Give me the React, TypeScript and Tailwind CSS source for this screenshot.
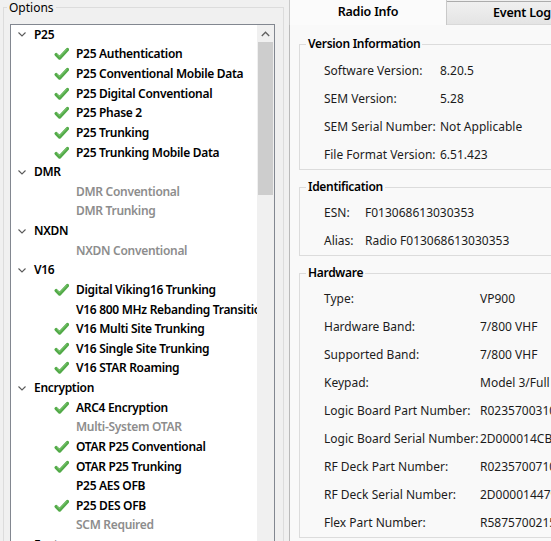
import React from "react";

type Kind = "h" | "c" | "g" | "b";
type Item = { t: string; k: Kind };

const items: Item[] = [
  { t: "P25", k: "h" },
  { t: "P25 Authentication", k: "c" },
  { t: "P25 Conventional Mobile Data", k: "c" },
  { t: "P25 Digital Conventional", k: "c" },
  { t: "P25 Phase 2", k: "c" },
  { t: "P25 Trunking", k: "c" },
  { t: "P25 Trunking Mobile Data", k: "c" },
  { t: "DMR", k: "h" },
  { t: "DMR Conventional", k: "g" },
  { t: "DMR Trunking", k: "g" },
  { t: "NXDN", k: "h" },
  { t: "NXDN Conventional", k: "g" },
  { t: "V16", k: "h" },
  { t: "Digital Viking16 Trunking", k: "c" },
  { t: "V16 800 MHz Rebanding Transition", k: "b" },
  { t: "V16 Multi Site Trunking", k: "c" },
  { t: "V16 Single Site Trunking", k: "c" },
  { t: "V16 STAR Roaming", k: "c" },
  { t: "Encryption", k: "h" },
  { t: "ARC4 Encryption", k: "c" },
  { t: "Multi-System OTAR", k: "g" },
  { t: "OTAR P25 Conventional", k: "c" },
  { t: "OTAR P25 Trunking", k: "c" },
  { t: "P25 AES OFB", k: "b" },
  { t: "P25 DES OFB", k: "c" },
  { t: "SCM Required", k: "g" },
  { t: "Features", k: "h" },
];

function Check() {
  return (
    <svg width="15" height="14" viewBox="0 0 15 14">
      <path
        d="M2.2 7.6 L5.6 11 L13.4 2.6"
        fill="none"
        stroke="#52aa48"
        strokeWidth="3.4"
        strokeLinecap="round"
        strokeLinejoin="round"
      />
      <path
        d="M3 7.3 L5.6 9.8 L12.8 2.5"
        fill="none"
        stroke="#86cc78"
        strokeWidth="0.9"
        strokeLinecap="round"
        strokeLinejoin="round"
      />
    </svg>
  );
}

function Chevron() {
  return (
    <svg width="8" height="5" viewBox="0 0 8 5" className="shrink-0">
      <path d="M0.5 0.5 L4 4 L7.5 0.5" fill="none" stroke="#5a5a5a" strokeWidth="1.1" />
    </svg>
  );
}

function TreeRow({ item }: { item: Item }) {
  if (item.k === "h") {
    return (
      <div className="h-[19.64px] flex items-center pl-[7px] whitespace-nowrap">
        <Chevron />
        <span className="ml-[8px] shrink-0 font-semibold tracking-[-0.3px]">{item.t}</span>
      </div>
    );
  }
  return (
    <div className="h-[19.64px] flex items-center pl-[43px] whitespace-nowrap">
      <span className="w-[15px] h-[14px] shrink-0 flex items-center justify-center">
        {item.k === "c" ? <Check /> : null}
      </span>
      <span
        className={
          "ml-[7px] shrink-0 font-semibold tracking-[-0.3px] " +
          (item.k === "g" ? "text-[#8d8d8d]" : "text-black")
        }
      >
        {item.t}
      </span>
    </div>
  );
}

type Row = [string, string];

function Group({
  title,
  rows,
  labelW,
  pt,
  className,
}: {
  title: string;
  rows: Row[];
  labelW: string;
  pt: string;
  className?: string;
}) {
  return (
    <fieldset className={"min-w-0 border border-[#dcdcdc] w-[290px] " + (className ?? "")}>
      <legend className="ml-[6px] px-[2px] font-semibold tracking-[-0.3px] text-[12px] leading-[16px] text-black">
        {title}
      </legend>
      <div className={"pl-[24px] " + pt}>
        {rows.map(([l, v]) => (
          <div key={l} className="h-[28px] flex items-center whitespace-nowrap text-[#1c1c1c]">
            <span className={labelW + " shrink-0"}>{l}</span>
            <span className="shrink-0">{v}</span>
          </div>
        ))}
      </div>
    </fieldset>
  );
}

export default function App() {
  return (
    <div className="w-[551px] h-[541px] overflow-hidden flex bg-[#f0f0f0] font-['Noto_Sans',sans-serif] text-[12px] text-black">
      {/* Left: Options */}
      <div className="w-[289px] shrink-0 pl-[3px] pr-[5px]">
        <fieldset className="min-w-0 border border-[#dcdcdc] h-[620px]">
          <legend className="ml-[3px] px-[2px] leading-[15px]">Options</legend>
          <div className="mt-[9px] ml-[6px] mr-[8px] h-[600px] flex border border-[#828790] bg-white">
            <div className="flex-1 min-w-0 overflow-hidden">
              {items.map((it) => (
                <TreeRow key={it.t} item={it} />
              ))}
            </div>
            <div className="w-[17px] shrink-0 bg-[#f0f0f0] flex flex-col items-center">
              <div className="h-[17px] w-full flex items-center justify-center">
                <svg width="9" height="6" viewBox="0 0 9 6">
                  <path d="M0.8 5 L4.5 1.2 L8.2 5" fill="none" stroke="#606060" strokeWidth="1.3" />
                </svg>
              </div>
              <div className="w-[15px] h-[153px] bg-[#cdcdcd]" />
            </div>
          </div>
        </fieldset>
      </div>

      {/* Right: tabs */}
      <div className="flex-1 min-w-0 flex flex-col">
        <div className="h-[25px] flex items-end shrink-0">
          <div className="w-[158px] shrink-0 h-[25px] border-l border-r border-[#c9c9c9] bg-[#fbfbfb] flex items-center justify-center font-semibold tracking-[-0.2px] text-[12.5px]">
            Radio Info
          </div>
          <div className="flex-1 h-[24px] border-t border-r border-[#acacac] border-b border-b-[#d9d9d9] bg-gradient-to-b from-[#f0f0f0] to-[#e4e4e4] flex items-center pl-[46px] font-semibold tracking-[-0.2px] text-[12.5px] whitespace-nowrap">
            Event Log
          </div>
        </div>
        <div className="flex-1 min-h-0 overflow-hidden border-l border-[#b9b9b9] bg-[#f9f9f9] pl-[9px] pt-[11px]">
          <Group
            title="Version Information"
            labelW="w-[116px]"
            pt="pt-[5px]"
            rows={[
              ["Software Version:", "8.20.5"],
              ["SEM Version:", "5.28"],
              ["SEM Serial Number:", "Not Applicable"],
              ["File Format Version:", "6.51.423"],
            ]}
          />
          <Group
            title="Identification"
            labelW="w-[41px]"
            pt="pt-[4px]"
            className="mt-[9px]"
            rows={[
              ["ESN:", "F013068613030353"],
              ["Alias:", "Radio F013068613030353"],
            ]}
          />
          <Group
            title="Hardware"
            labelW="w-[156px]"
            pt="pt-[4px]"
            className="mt-[9px]"
            rows={[
              ["Type:", "VP900"],
              ["Hardware Band:", "7/800 VHF"],
              ["Supported Band:", "7/800 VHF"],
              ["Keypad:", "Model 3/Full"],
              ["Logic Board Part Number:", "R0235700310001"],
              ["Logic Board Serial Number:", "2D000014CB9A"],
              ["RF Deck Part Number:", "R0235700710001"],
              ["RF Deck Serial Number:", "2D0000144790"],
              ["Flex Part Number:", "R5875700215001"],
            ]}
          />
        </div>
      </div>
    </div>
  );
}
